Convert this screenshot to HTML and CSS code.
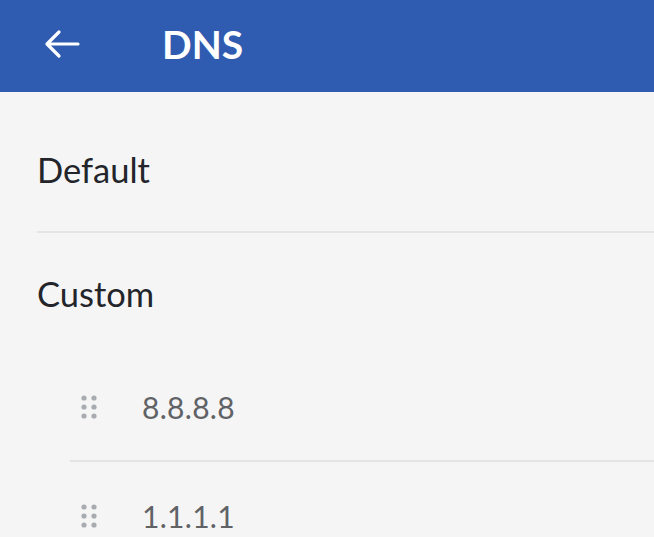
FILE: index.html
```html
<!DOCTYPE html>
<html>
<head>
  <title>DNS</title>
  <link rel="stylesheet" href="styles.css">
</head>
<body>
  <div class="appbar">
    <svg class="back" width="36" height="30" viewBox="0 0 36 30">
      <path d="M34 15 H3 M15 3 L3 15 L15 27" fill="none" stroke="#fff" stroke-width="3.2" stroke-linecap="round" stroke-linejoin="round"/>
    </svg>
    <div class="title">DNS</div>
  </div>

  <div class="list">
    <div class="row first">Default</div>
    <div class="row section">Custom</div>

    <div class="item">
      <svg class="handle" width="18" height="26" viewBox="0 0 18 26">
        <circle cx="4" cy="4" r="2.6"/><circle cx="14" cy="4" r="2.6"/>
        <circle cx="4" cy="13" r="2.6"/><circle cx="14" cy="13" r="2.6"/>
        <circle cx="4" cy="22" r="2.6"/><circle cx="14" cy="22" r="2.6"/>
      </svg>
      <span>8.8.8.8</span>
    </div>
    <div class="item">
      <svg class="handle" width="18" height="26" viewBox="0 0 18 26">
        <circle cx="4" cy="4" r="2.6"/><circle cx="14" cy="4" r="2.6"/>
        <circle cx="4" cy="13" r="2.6"/><circle cx="14" cy="13" r="2.6"/>
        <circle cx="4" cy="22" r="2.6"/><circle cx="14" cy="22" r="2.6"/>
      </svg>
      <span>1.1.1.1</span>
    </div>
  </div>
</body>
</html>
```

FILE: styles.css
```css
body {
  margin: 0;
  font-family: Lato, "Open Sans", sans-serif;
  background-color: #f5f5f5;
  overflow: hidden;
}
.appbar {
  height: 92px;
  background-color: #2f5cb0;
  display: flex;
  align-items: center;
  padding-bottom: 4px;
  box-sizing: border-box;
}
.back {
  margin-left: 44px;
}
.title {
  margin-left: 82px;
  color: #fff;
  font-size: 39px;
  font-weight: 700;
}
.list {
  padding-left: 37px;
}
.row {
  display: flex;
  align-items: center;
  font-size: 34.5px;
  color: #23252b;
}
.row.first {
  height: 141px;
  padding-top: 16px;
  box-sizing: border-box;
  border-bottom: 2px solid #e4e4e4;
}
.row.section {
  height: 120px;
}
.item {
  margin-left: 33px;
  height: 107px;
  display: flex;
  align-items: center;
  border-bottom: 2px solid #e4e4e4;
  font-size: 30px;
  letter-spacing: 0.3px;
  color: #606266;
}
.handle {
  margin-left: 10px;
  margin-right: 44px;
  fill: #a8abb0;
}
```
